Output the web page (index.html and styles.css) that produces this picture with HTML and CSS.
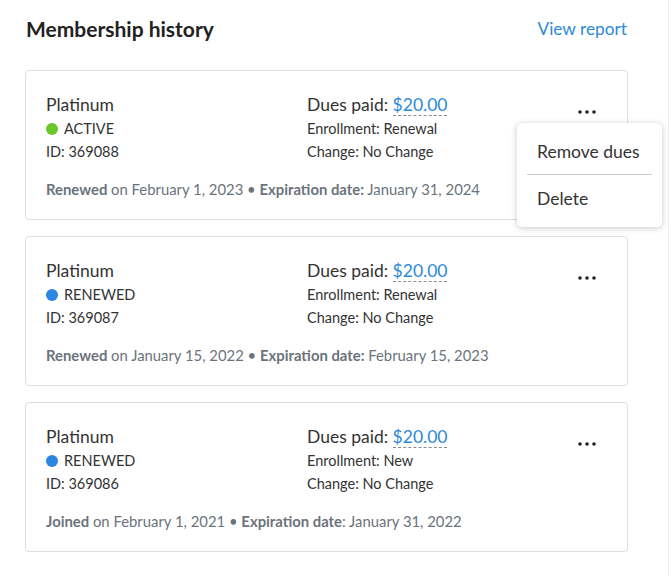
FILE: index.html
```html
<!DOCTYPE html>
<html lang="en">
<head>
<meta charset="utf-8">
<title>Membership history</title>
<link rel="stylesheet" href="styles.css">
</head>
<body>
<div class="page">
  <div class="header">
    <h2 class="title">Membership history</h2>
    <a class="view-report" href="#">View report</a>
  </div>

  <div class="list">
    <div class="card">
      <div class="card-body">
        <div class="col-left">
          <div class="plan">Platinum</div>
          <div class="status"><span class="dot dot-green"></span>ACTIVE</div>
          <div class="meta">ID: 369088</div>
        </div>
        <div class="col-right">
          <div class="dues">Dues paid: <span class="amount">$20.00</span></div>
          <div class="meta">Enrollment: Renewal</div>
          <div class="meta">Change: No Change</div>
        </div>
        <div class="actions">
          <button class="more" aria-label="More">
            <svg width="18" height="4" viewBox="0 0 18 4"><circle cx="2" cy="2" r="1.8"/><circle cx="9" cy="2" r="1.8"/><circle cx="16" cy="2" r="1.8"/></svg>
          </button>
        </div>
      </div>
      <div class="footer"><b>Renewed</b> on February 1, 2023 &bull; <b>Expiration date:</b> January 31, 2024</div>
      <div class="menu">
        <div class="menu-item">Remove dues</div>
        <div class="menu-sep"></div>
        <div class="menu-item">Delete</div>
      </div>
    </div>

    <div class="card">
      <div class="card-body">
        <div class="col-left">
          <div class="plan">Platinum</div>
          <div class="status"><span class="dot dot-blue"></span>RENEWED</div>
          <div class="meta">ID: 369087</div>
        </div>
        <div class="col-right">
          <div class="dues">Dues paid: <span class="amount">$20.00</span></div>
          <div class="meta">Enrollment: Renewal</div>
          <div class="meta">Change: No Change</div>
        </div>
        <div class="actions">
          <button class="more" aria-label="More">
            <svg width="18" height="4" viewBox="0 0 18 4"><circle cx="2" cy="2" r="1.8"/><circle cx="9" cy="2" r="1.8"/><circle cx="16" cy="2" r="1.8"/></svg>
          </button>
        </div>
      </div>
      <div class="footer"><b>Renewed</b> on January 15, 2022 &bull; <b>Expiration date:</b> February 15, 2023</div>
    </div>

    <div class="card">
      <div class="card-body">
        <div class="col-left">
          <div class="plan">Platinum</div>
          <div class="status"><span class="dot dot-blue"></span>RENEWED</div>
          <div class="meta">ID: 369086</div>
        </div>
        <div class="col-right">
          <div class="dues">Dues paid: <span class="amount">$20.00</span></div>
          <div class="meta">Enrollment: New</div>
          <div class="meta">Change: No Change</div>
        </div>
        <div class="actions">
          <button class="more" aria-label="More">
            <svg width="18" height="4" viewBox="0 0 18 4"><circle cx="2" cy="2" r="1.8"/><circle cx="9" cy="2" r="1.8"/><circle cx="16" cy="2" r="1.8"/></svg>
          </button>
        </div>
      </div>
      <div class="footer"><b>Joined</b> on February 1, 2021 &bull; <b>Expiration date</b>: January 31, 2022</div>
    </div>
  </div>
</div>
</body>
</html>
```

FILE: styles.css
```css
* { box-sizing: border-box; }

html, body {
  margin: 0;
  padding: 0;
  background: #ffffff;
}

body {
  font-family: Lato, "Liberation Sans", sans-serif;
  color: #333333;
}

.page {
  width: 669px;
  min-height: 576px;
  border-right: 1px solid #ececec;
  padding: 17px 41px 0 25px;
}

.header {
  display: flex;
  justify-content: space-between;
  align-items: center;
  height: 24px;
  margin-bottom: 29px;
  padding-left: 1px;
}

.title {
  margin: 0;
  font-size: 21px;
  font-weight: 700;
  color: #222222;
  line-height: 24px;
}

.view-report {
  color: #2d8ad8;
  text-decoration: none;
  font-size: 17.3px;
  line-height: 24px;
}

.list {
  display: flex;
  flex-direction: column;
  gap: 16px;
}

.card {
  position: relative;
  width: 603px;
  height: 150px;
  border: 1px solid #dedede;
  border-radius: 4px;
  padding: 22px 20px 20px 20px;
  background: #fff;
}

.card-body {
  display: grid;
  grid-template-columns: 261px 1fr 52px;
}

.plan, .dues {
  font-size: 17.5px;
  line-height: 24px;
  color: #333;
}

.status, .meta {
  font-size: 14.5px;
  line-height: 23px;
  color: #333;
}

.status {
  display: flex;
  align-items: center;
}

.dot {
  display: inline-block;
  width: 12px;
  height: 12px;
  border-radius: 50%;
  margin-right: 6px;
}

.dot-green { background: #6ac72a; }
.dot-blue { background: #2a86e0; }

.amount {
  color: #2d8ad8;
  border-bottom: 1px dashed #8a8a8a;
}

.actions {
  display: flex;
  justify-content: flex-start;
}

.more {
  border: 0;
  background: transparent;
  padding: 0;
  margin: 17px 0 0 23px;
  height: 4px;
  line-height: 0;
  cursor: pointer;
}

.more svg { fill: #222; display: block; }

.footer {
  margin-top: 16px;
  font-size: 14.85px;
  line-height: 20px;
  color: #6c737c;
}

.footer b {
  font-weight: 700;
  color: #6c737c;
}

.menu {
  position: absolute;
  left: 491px;
  top: 52px;
  width: 145px;
  height: 104px;
  background: #fff;
  border-radius: 5px;
  box-shadow: 0 1px 6px rgba(0, 0, 0, 0.22);
  padding: 17px 10px 0 10px;
  z-index: 5;
}

.menu-item {
  font-size: 17.5px;
  line-height: 24px;
  color: #333;
  padding-left: 10px;
}

.menu-sep {
  height: 1px;
  background: #c8ccd2;
  margin: 10px 0 12px 0;
}
```
